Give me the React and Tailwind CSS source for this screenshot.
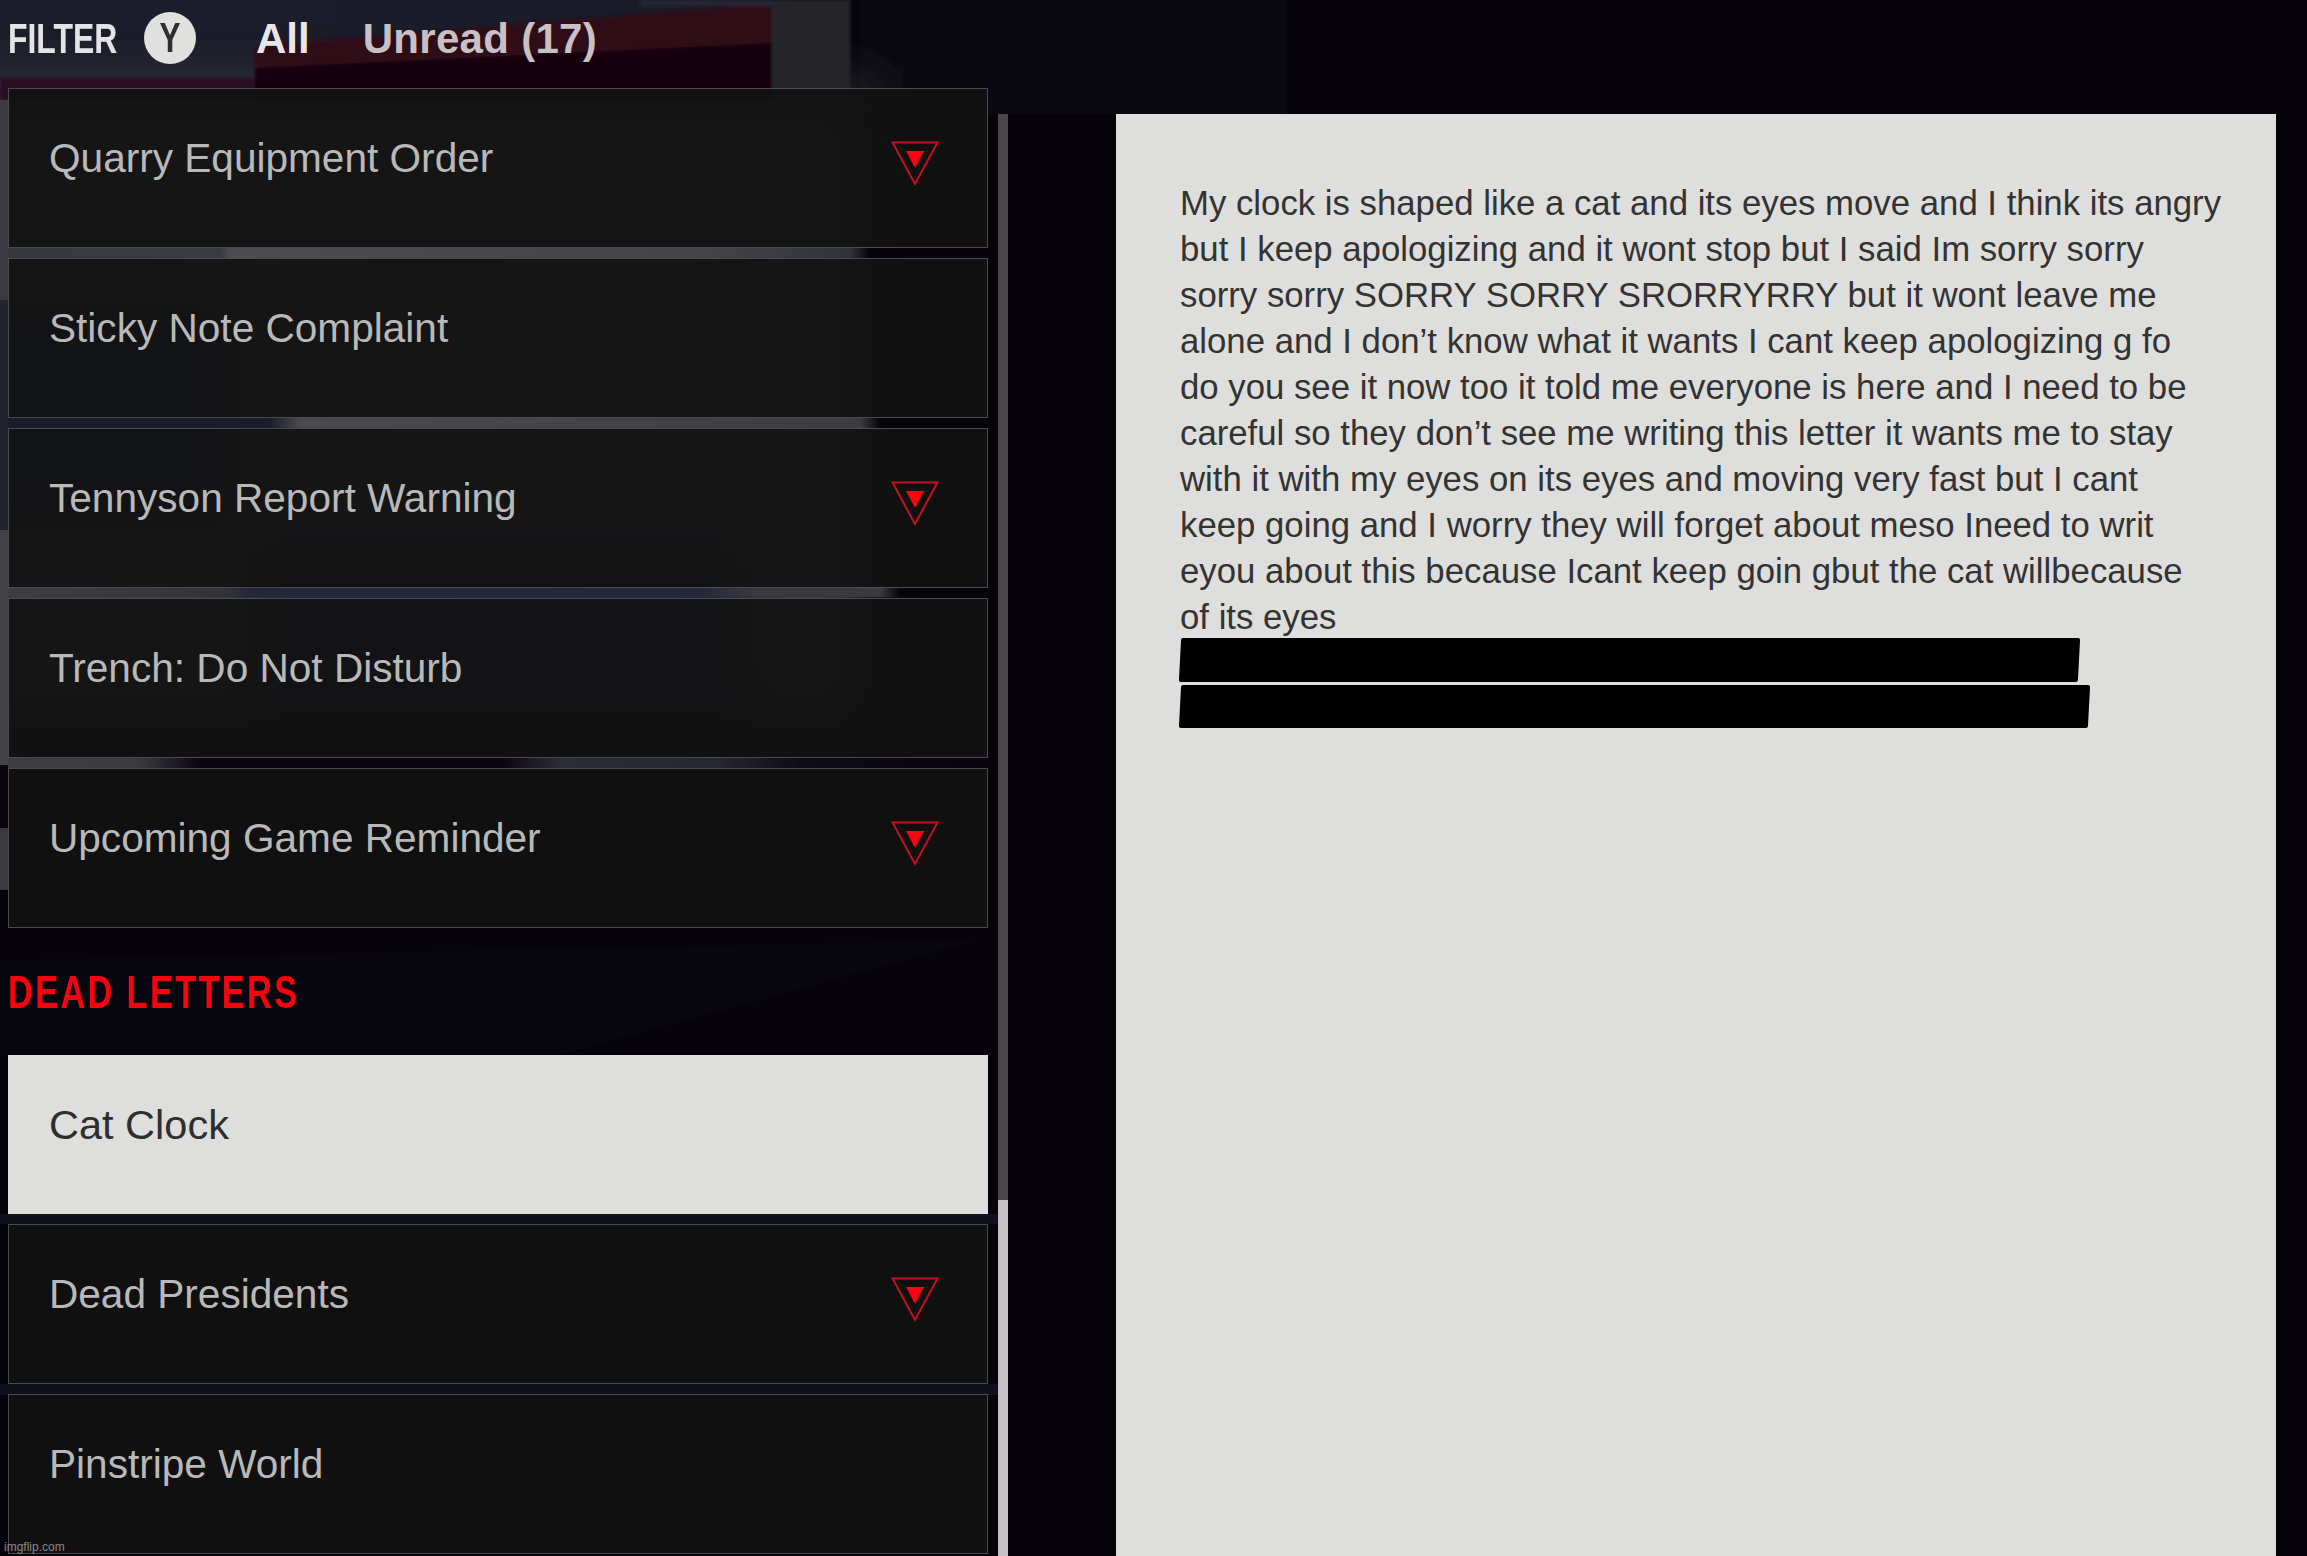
import React from "react";

const letterLines = [
  "My clock is shaped like a cat and its eyes move and I think its angry",
  "but I keep apologizing and it wont stop but I said Im sorry sorry",
  "sorry sorry SORRY SORRY SRORRYRRY but it wont leave me",
  "alone and I don’t know what it wants I cant keep apologizing g fo",
  "do you see it now too it told me everyone is here and I need to be",
  "careful so they don’t see me writing this letter it wants me to stay",
  "with it with my eyes on its eyes and moving very fast but I cant",
  "keep going and I worry they will forget about meso Ineed to writ",
  "eyou about this because Icant keep goin gbut the cat willbecause",
  "of its eyes",
];

// blurred game scene behind the menu
const Backdrop = () => (
  <svg className="absolute inset-0" width="2307" height="1556" viewBox="0 0 2307 1556">
    <defs>
      <linearGradient id="navy" x1="0" y1="0" x2="1" y2="0">
        <stop offset="0" stopColor="#1c1e2c" />
        <stop offset="0.8" stopColor="#1a1b28" />
        <stop offset="1" stopColor="#07030b" />
      </linearGradient>
      <linearGradient id="gap1" x1="0" y1="0" x2="1" y2="0">
        <stop offset="0" stopColor="#38383f" />
        <stop offset="0.22" stopColor="#3a3a42" />
        <stop offset="0.23" stopColor="#4c4c50" />
        <stop offset="0.7" stopColor="#444448" />
        <stop offset="0.85" stopColor="#32323c" />
        <stop offset="0.87" stopColor="#07030b" />
      </linearGradient>
      <linearGradient id="gap2" x1="0" y1="0" x2="1" y2="0">
        <stop offset="0" stopColor="#1b1d2b" />
        <stop offset="0.27" stopColor="#1b1d2b" />
        <stop offset="0.3" stopColor="#4a4a4e" />
        <stop offset="0.86" stopColor="#3c3c42" />
        <stop offset="0.88" stopColor="#07030b" />
      </linearGradient>
      <linearGradient id="gap3" x1="0" y1="0" x2="1" y2="0">
        <stop offset="0" stopColor="#3f3f43" />
        <stop offset="0.22" stopColor="#33343a" />
        <stop offset="0.25" stopColor="#24263a" />
        <stop offset="0.7" stopColor="#25273a" />
        <stop offset="0.76" stopColor="#3a3a3e" />
        <stop offset="0.88" stopColor="#3a3a3e" />
        <stop offset="0.9" stopColor="#07030b" />
      </linearGradient>
      <linearGradient id="gap4" x1="0" y1="0" x2="1" y2="0">
        <stop offset="0" stopColor="#3e3e42" />
        <stop offset="0.14" stopColor="#3a3a3e" />
        <stop offset="0.2" stopColor="#0a0510" />
        <stop offset="0.5" stopColor="#0a0510" />
        <stop offset="0.56" stopColor="#2c2c36" />
        <stop offset="0.72" stopColor="#26262f" />
        <stop offset="0.8" stopColor="#0e0b1a" />
        <stop offset="1" stopColor="#07030b" />
      </linearGradient>
      <filter id="soft">
        <feGaussianBlur stdDeviation="1.5" />
      </filter>
      <filter id="wide" x="-20%" y="-20%" width="140%" height="140%">
        <feGaussianBlur stdDeviation="30" />
      </filter>
    </defs>
    <rect width="2307" height="1556" fill="#06030a" />
    <rect x="850" y="0" width="437" height="114" fill="#0a0811" />
    <rect x="0" y="0" width="860" height="88" fill="url(#navy)" />
    <polygon points="0,960 0,1055 560,1055 980,940" fill="#08060f" />

    {/* scene behind the top rows, seen through them */}
    <g filter="url(#wide)">
      <rect x="-60" y="88" width="930" height="640" fill="#3a3a40" />
      <rect x="-60" y="300" width="300" height="230" fill="#1f2230" />
      <rect x="240" y="530" width="520" height="200" fill="#25273a" />
    </g>

    <g filter="url(#soft)">
      <polygon points="255,46 772,3 772,43 255,68" fill="#2e0e16" />
      <polygon points="255,68 772,43 772,100 255,100" fill="#130610" />
      <rect x="772" y="0" width="78" height="100" fill="#28282c" />
      <rect x="640" y="0" width="132" height="6" fill="#262836" />
      <rect x="0" y="78" width="255" height="22" fill="#2c1020" />
    </g>

    <rect x="0" y="247" width="1000" height="11" fill="url(#gap1)" />
    <rect x="0" y="417" width="1000" height="11" fill="url(#gap2)" />
    <rect x="0" y="588" width="1000" height="9" fill="url(#gap3)" />
    <rect x="0" y="757" width="1000" height="11" fill="url(#gap4)" />
    <rect x="0" y="100" width="8" height="200" fill="#3a3a40" />
    <rect x="0" y="300" width="8" height="230" fill="#22242f" />
    <rect x="0" y="530" width="8" height="235" fill="#434347" />
    <rect x="0" y="765" width="8" height="63" fill="#0a0510" />
    <rect x="0" y="828" width="8" height="62" fill="#3a3a3e" />
    <rect x="0" y="890" width="8" height="60" fill="#07030b" />
    <rect x="0" y="1214" width="1000" height="10" fill="#11111d" />
    <rect x="0" y="1384" width="1000" height="11" fill="#11111d" />
  </svg>
);

const ArrowBadge = () => (
  <svg width="48" height="46" viewBox="0 0 48 46" className="shrink-0 block">
    <polygon points="1.5,1.5 46.5,1.5 24,43" fill="none" stroke="#c8101c" strokeWidth="2" />
    <polygon points="15,10 33,10 24,27" fill="#fb0410" />
  </svg>
);

const MailRow = ({ title, unread, selected }) => (
  <div
    className={
      selected
        ? "h-[159px] flex items-start justify-between pl-[41px] pr-[49px] pt-[47px] bg-[#dededc]"
        : "h-[160px] flex items-start justify-between pl-[40px] pr-[48px] pt-[46px] bg-[#121212]/90 border border-[#49494e]"
    }
  >
    <span className={selected ? "text-[41.5px] leading-[46px] text-[#2e2e2e]" : "text-[40.6px] leading-[46px] text-[#b9b9b9]"}>
      {title}
    </span>
    {unread && (
      <span className="mt-[6px]">
        <ArrowBadge />
      </span>
    )}
  </div>
);

export default function App() {
  return (
    <div className="relative w-[2307px] h-[1556px] overflow-hidden font-['Liberation_Sans',Arial,sans-serif]">
      <Backdrop />

      <div className="relative flex h-full">
        {/* left column */}
        <div className="w-[980px] ml-[8px] shrink-0">
          <div className="h-[88px] flex items-start pt-[12px]">
            <div className="w-[136px] mt-[4px]">
              <span className="inline-block origin-left scale-x-[0.76] text-[42px] leading-[46px] font-bold text-[#e4e4e4]">
                FILTER
              </span>
            </div>
            <span className="w-[52px] h-[52px] rounded-full bg-[#e0e0de] flex items-center justify-center">
              <span className="inline-block scale-x-[0.75] text-[42px] leading-[46px] font-bold text-[#2f2f2f]">Y</span>
            </span>
            <span className="mt-[4px] ml-[60px] text-[42px] leading-[46px] font-bold text-[#e8e6e8]">All</span>
            <span className="mt-[4px] ml-[53px] text-[42px] leading-[46px] font-bold tracking-[0.3px] text-[#c9c0c5]">
              Unread (17)
            </span>
          </div>

          <div className="flex flex-col gap-[10px]">
            <MailRow title="Quarry Equipment Order" unread />
            <MailRow title="Sticky Note Complaint" />
            <MailRow title="Tennyson Report Warning" unread />
            <MailRow title="Trench: Do Not Disturb" />
            <MailRow title="Upcoming Game Reminder" unread />
          </div>

          <div className="h-[127px] pt-[38px]">
            <h2 className="inline-block origin-left scale-x-[0.75] text-[46px] leading-[52px] font-bold tracking-[3px] text-[#f5040f] whitespace-nowrap">
              DEAD LETTERS
            </h2>
          </div>

          <div className="flex flex-col gap-[10px]">
            <MailRow title="Cat Clock" selected />
            <MailRow title="Dead Presidents" unread />
            <MailRow title="Pinstripe World" />
          </div>
        </div>

        {/* scrollbar */}
        <div className="w-[10px] ml-[10px] mt-[114px] shrink-0 flex flex-col">
          <div className="h-[1086px] bg-[#4a464c]" />
          <div className="flex-1 bg-[#c4c1c6]" />
        </div>

        {/* letter */}
        <div className="w-[1160px] ml-[108px] mt-[114px] shrink-0 bg-[#dededc] pl-[64px] pt-[66px]">
          <div className="text-[34.75px] leading-[46px] text-[#333333] whitespace-nowrap">
            {letterLines.map((line) => (
              <div key={line}>{line}</div>
            ))}
          </div>
          <div className="mt-[-2px] w-[899px] h-[44px] bg-black rounded-[2px] -skew-x-3" />
          <div className="mt-[3px] w-[909px] h-[43px] bg-black rounded-[2px] -skew-x-3" />
        </div>
      </div>

      <span className="absolute left-[4px] bottom-[2px] text-[12px] leading-[14px] text-[#8a8a8a]">imgflip.com</span>
    </div>
  );
}
